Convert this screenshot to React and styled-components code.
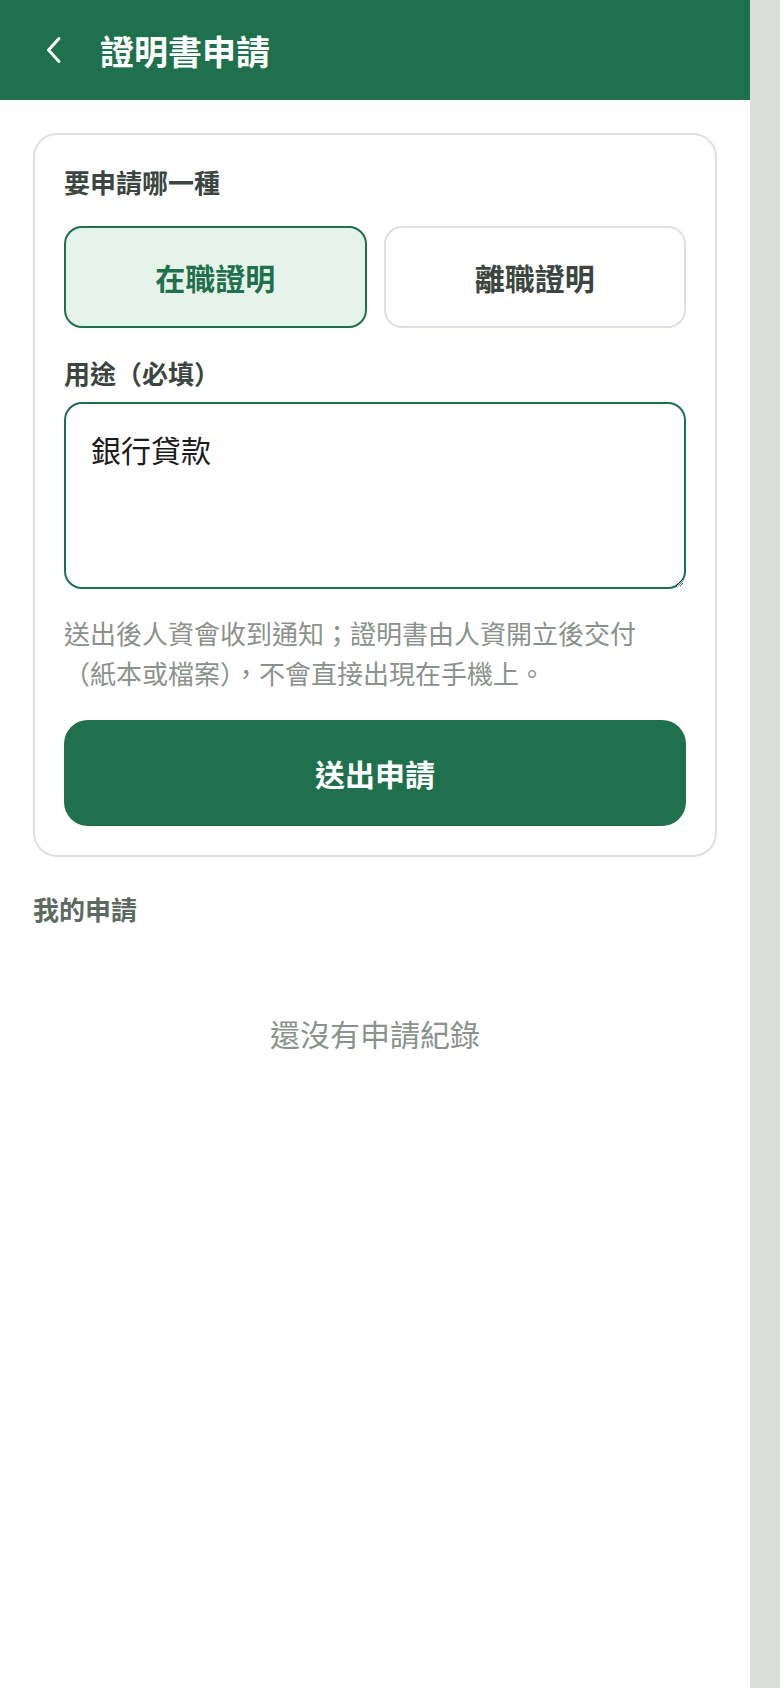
import React, { useState } from "react";
import styled, { createGlobalStyle } from "styled-components";

const Global = createGlobalStyle`
  html, body { margin: 0; padding: 0; }
  body {
    background: #d9ded8;
    font-family: "Noto Sans CJK TC", "Noto Sans", sans-serif;
  }
  * { box-sizing: border-box; }
`;

const Page = styled.div`
  width: 750px;
  min-height: 100vh;
  background: #ffffff;
`;

const Header = styled.header`
  height: 100px;
  background: #1f704d;
  display: flex;
  align-items: center;
  padding-left: 43px;
  gap: 35px;
`;

const BackButton = styled.button`
  border: 0;
  background: transparent;
  padding: 0;
  width: 22px;
  height: 30px;
  display: flex;
  align-items: center;
  justify-content: center;
  cursor: pointer;
`;

const Title = styled.h1`
  margin: 0;
  color: #ffffff;
  font-size: 34px;
  font-weight: 700;
  line-height: 1.2;
  padding-top: 2px;
`;

const Content = styled.main`
  padding: 33px 33px 40px;
`;

const Card = styled.section`
  border: 2px solid #dde2da;
  border-radius: 24px;
  padding: 29px;
  display: flex;
  flex-direction: column;
`;

const Label = styled.div`
  color: #3b4641;
  font-size: 26px;
  font-weight: 700;
  line-height: 36px;
  margin-bottom: ${(p) => p.$gap}px;
`;

const Options = styled.div`
  display: grid;
  grid-template-columns: 1fr 1fr;
  gap: 17px;
  margin-bottom: 27px;
`;

const Option = styled.button`
  height: 102px;
  border-radius: 18px;
  border: 2px solid ${(p) => (p.$active ? "#1f704d" : "#dde2da")};
  background: ${(p) => (p.$active ? "#e6f3ea" : "#ffffff")};
  color: ${(p) => (p.$active ? "#1f704d" : "#3b4641")};
  font-family: inherit;
  font-size: 30px;
  font-weight: 700;
  cursor: pointer;
`;

const TextArea = styled.textarea`
  display: block;
  width: 100%;
  height: 187px;
  border: 2px solid #1f704d;
  border-radius: 18px;
  padding: 24px 25px;
  font-family: inherit;
  font-size: 30px;
  line-height: 42px;
  color: #1c1c1c;
  outline: none;
  margin: 0;
`;

const Hint = styled.p`
  margin: 24px 0 27px;
  color: #8a928b;
  font-size: 26px;
  line-height: 40px;
`;

const Submit = styled.button`
  height: 106px;
  border: 0;
  border-radius: 24px;
  background: #1f704d;
  color: #ffffff;
  font-family: inherit;
  font-size: 30px;
  font-weight: 700;
  cursor: pointer;
`;

const SectionTitle = styled.h2`
  margin: 34px 0 0;
  color: #5d6a60;
  font-size: 26px;
  font-weight: 700;
  line-height: 36px;
`;

const Empty = styled.div`
  padding-top: 85px;
  text-align: center;
  color: #8a928b;
  font-size: 30px;
  line-height: 42px;
`;

export default function App() {
  const [kind, setKind] = useState("in");
  const [purpose, setPurpose] = useState("銀行貸款");
  return (
    <>
      <Global />
      <Page>
        <Header>
          <BackButton aria-label="返回">
            <svg width="18" height="28" viewBox="0 0 18 28" fill="none">
              <polyline
                points="14,2.5 3.5,14 14,25.5"
                stroke="#ffffff"
                strokeWidth="3"
                strokeLinecap="round"
                strokeLinejoin="round"
              />
            </svg>
          </BackButton>
          <Title>證明書申請</Title>
        </Header>
        <Content>
          <Card>
            <Label $gap={26}>要申請哪一種</Label>
            <Options>
              <Option $active={kind === "in"} onClick={() => setKind("in")}>
                在職證明
              </Option>
              <Option $active={kind === "out"} onClick={() => setKind("out")}>
                離職證明
              </Option>
            </Options>
            <Label $gap={11}>用途（必填）</Label>
            <TextArea value={purpose} onChange={(e) => setPurpose(e.target.value)} />
            <Hint>
              送出後人資會收到通知；證明書由人資開立後交付（紙本或檔案），不會直接出現在手機上。
            </Hint>
            <Submit>送出申請</Submit>
          </Card>
          <SectionTitle>我的申請</SectionTitle>
          <Empty>還沒有申請紀錄</Empty>
        </Content>
      </Page>
    </>
  );
}
